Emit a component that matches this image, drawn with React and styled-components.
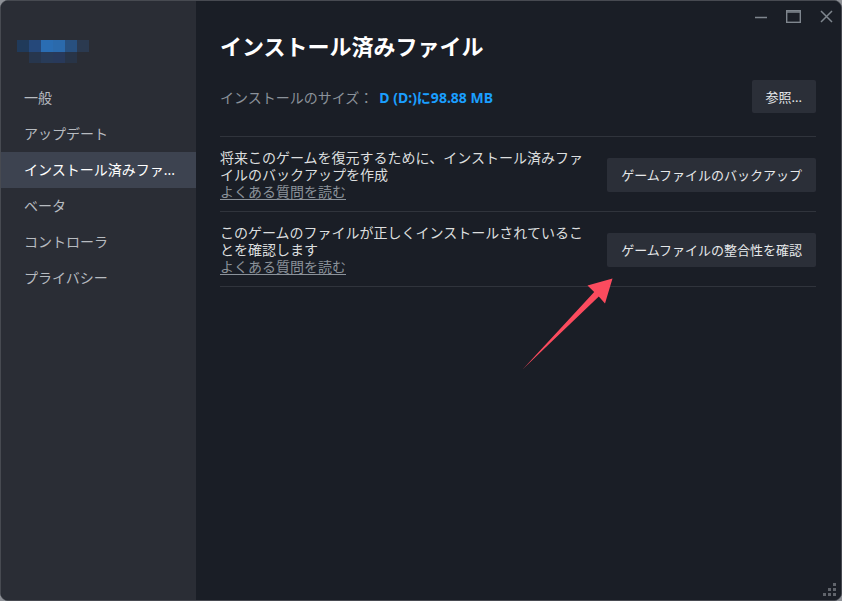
import React from "react";
import styled, { createGlobalStyle } from "styled-components";

const Global = createGlobalStyle`
  html, body { margin: 0; padding: 0; background: #8d9096; }
  * { box-sizing: border-box; }
  body { font-family: "Noto Sans", "Noto Sans CJK JP", sans-serif; }
`;

const Window = styled.div`
  position: relative;
  width: 842px;
  height: 601px;
  border: 1px solid #474a51;
  border-radius: 8px;
  overflow: hidden;
  display: flex;
  background: #1a1e26;
`;

const Sidebar = styled.aside`
  width: 195px;
  flex-shrink: 0;
  background: #2a2d35;
  padding-top: 39px;
  display: flex;
  flex-direction: column;
`;

const Logo = styled.div`
  margin-left: 16px;
  width: 72px;
  height: 23px;
  display: grid;
  grid-template-columns: repeat(6, 12px);
  grid-template-rows: 12px 11px;
  filter: blur(0.6px);
  margin-bottom: 17px;
`;

const Px = styled.span`
  background: ${(p) => p.$c};
`;

const NavItem = styled.div`
  height: 36px;
  line-height: 36px;
  padding-left: 23px;
  font-size: 14px;
  white-space: nowrap;
  overflow: hidden;
  color: ${(p) => (p.$active ? "#ffffff" : "#b7bbc0")};
  background: ${(p) => (p.$active ? "#3d4350" : "transparent")};
`;

const Main = styled.main`
  flex: 1;
  display: flex;
  flex-direction: column;
  background: #1a1e26;
`;

const TitleBar = styled.div`
  height: 31px;
  display: flex;
  align-items: center;
  justify-content: flex-end;
  gap: 19px;
  padding-right: 8px;
`;

const WinBtn = styled.div`
  display: flex;
  align-items: center;
  justify-content: center;
  color: #7f868e;
`;

const Content = styled.div`
  padding: 0 25px 0 24px;
  display: flex;
  flex-direction: column;
`;

const Title = styled.h1`
  margin: 0;
  font-size: 22px;
  line-height: 28px;
  font-weight: 700;
  color: #ffffff;
`;

const SizeRow = styled.div`
  margin-top: 20px;
  height: 33px;
  display: flex;
  align-items: center;
  justify-content: space-between;
  margin-bottom: 23px;
`;

const SizeLabel = styled.span`
  font-size: 14px;
  color: #8b929a;
`;

const SizeValue = styled.span`
  margin-left: 6px;
  font-size: 14px;
  font-weight: 700;
  color: #1a9fff;
`;

const Button = styled.button`
  flex-shrink: 0;
  height: ${(p) => p.$h || 34}px;
  padding: 0 ${(p) => p.$px || 14}px;
  border: none;
  border-radius: 2px;
  background: #2b2f38;
  color: #e6e8ea;
  font-family: "Noto Sans", "Noto Sans CJK JP", sans-serif;
  font-size: 13px;
  cursor: pointer;
`;

const Row = styled.div`
  border-top: 1px solid #30343c;
  padding: 12px 0 11px;
  display: flex;
  align-items: center;
  gap: 16px;
  ${(p) => p.$last && "border-bottom: 1px solid #30343c;"}
`;

const RowText = styled.div`
  flex: 1;
  font-size: 14px;
  line-height: 17px;
  color: #dcdedf;
`;

const FaqLink = styled.a`
  display: block;
  color: #8b929a;
  text-decoration: underline;
  text-underline-offset: 2px;
`;

const Overlay = styled.svg`
  position: absolute;
  left: 0;
  top: 0;
  pointer-events: none;
`;

const logoColors = [
  "#203a5a", "#25487a", "#2a6db3", "#2b6aac", "#28507f", "#2b3a50",
  "#2a2d35", "#27364d", "#283b58", "#28395a", "#283447", "#2a2d35",
];

export default function App() {
  const items = ["一般", "アップデート", "インストール済みファ...", "ベータ", "コントローラ", "プライバシー"];
  return (
    <>
      <Global />
      <Window>
        <Sidebar>
          <Logo>
            {logoColors.map((c, i) => (
              <Px key={i} $c={c} />
            ))}
          </Logo>
          {items.map((t, i) => (
            <NavItem key={t} $active={i === 2}>
              {t}
            </NavItem>
          ))}
        </Sidebar>
        <Main>
          <TitleBar>
            <WinBtn>
              <svg width="12" height="12" viewBox="0 0 12 12">
                <line x1="0" y1="6.5" x2="12" y2="6.5" stroke="currentColor" strokeWidth="1.4" />
              </svg>
            </WinBtn>
            <WinBtn>
              <svg width="15" height="13" viewBox="0 0 15 13">
                <rect x="0.7" y="0.7" width="13.6" height="11.6" fill="none" stroke="currentColor" strokeWidth="1.4" />
                <line x1="0.7" y1="2" x2="14.3" y2="2" stroke="currentColor" strokeWidth="1.6" />
              </svg>
            </WinBtn>
            <WinBtn>
              <svg width="13" height="13" viewBox="0 0 13 13">
                <path d="M1 1 L12 12 M12 1 L1 12" stroke="currentColor" strokeWidth="1.5" />
              </svg>
            </WinBtn>
          </TitleBar>
          <Content>
            <Title>インストール済みファイル</Title>
            <SizeRow>
              <div>
                <SizeLabel>インストールのサイズ：</SizeLabel>
                <SizeValue>D (D:)に98.88 MB</SizeValue>
              </div>
              <Button $h={33} $px={14}>参照...</Button>
            </SizeRow>
            <Row>
              <RowText>
                将来このゲームを復元するために、インストール済みファイルのバックアップを作成
                <FaqLink>よくある質問を読む</FaqLink>
              </RowText>
              <Button>ゲームファイルのバックアップ</Button>
            </Row>
            <Row $last>
              <RowText>
                このゲームのファイルが正しくインストールされていることを確認します
                <FaqLink>よくある質問を読む</FaqLink>
              </RowText>
              <Button>ゲームファイルの整合性を確認</Button>
            </Row>
          </Content>
        </Main>
        <Overlay width="842" height="601" viewBox="0 0 842 601">
          <polygon
            points="522,368 597.8,295.4 604,302.5 611.5,277.5 586.5,284.5 593.2,291"
            fill="#fb4b5e"
          />
          <g fill="#60646b">
            <rect x="832" y="582" width="3" height="3" />
            <rect x="827" y="587" width="3" height="3" />
            <rect x="832" y="587" width="3" height="3" />
            <rect x="822" y="592" width="3" height="3" />
            <rect x="827" y="592" width="3" height="3" />
            <rect x="832" y="592" width="3" height="3" />
          </g>
        </Overlay>
      </Window>
    </>
  );
}
